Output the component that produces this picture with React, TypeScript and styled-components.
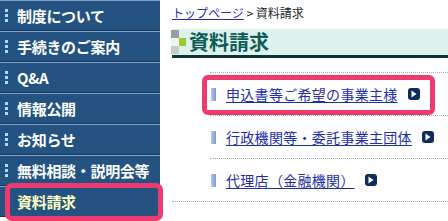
import styled, { createGlobalStyle } from 'styled-components';

const GlobalStyle = createGlobalStyle`
  body {
    margin: 0;
    background: #fff;
    font-family: "Noto Sans CJK JP", "Noto Sans", sans-serif;
  }
`;

const Page = styled.div`
  display: flex;
  gap: 12px;
  width: 448px;
  height: 221px;
  overflow: hidden;
`;

const SideNav = styled.ul`
  list-style: none;
  margin: 0;
  padding: 0;
  width: 160px;
  flex-shrink: 0;
  display: flex;
  flex-direction: column;
`;

const NavItem = styled.li<{ active?: boolean }>`
  position: relative;
  display: flex;
  align-items: center;
  gap: 9px;
  height: 29px;
  padding-left: 5px;
  background-color: #2d6193;
  background-image: radial-gradient(circle, #1f4b78 0.6px, transparent 0.9px);
  background-size: 2px 2px;
  border-top: 1px solid #7fa3c8;
  border-bottom: 1px solid #173a60;
  color: ${({ active }) => (active ? '#ffffc4' : '#ffffff')};
  font-size: 15px;
  font-weight: 700;
  letter-spacing: -0.3px;

  ${({ active }) =>
    active &&
    `
    &::after {
      content: '';
      position: absolute;
      left: 5px;
      right: -3px;
      top: -4px;
      bottom: -5px;
      border: 5px solid #ef3a6f;
      border-radius: 7px;
    }
  `}
`;

const NavDots = styled.span`
  width: 3px;
  height: 14px;
  background: repeating-linear-gradient(to bottom, #a8dcff 0 3px, transparent 3px 5px);
`;

const Main = styled.div`
  flex: 1;
  display: flex;
  flex-direction: column;
`;

const Breadcrumb = styled.div`
  height: 24px;
  padding-top: 5px;
  font-size: 12px;
  line-height: 16px;
  color: #222;

  a {
    color: #2a2ab8;
    text-decoration: underline;
  }
`;

const Heading = styled.h2`
  display: flex;
  align-items: center;
  gap: 3px;
  margin: 0;
  height: 26px;
  background: #ddf2ec;
  border-bottom: 3px solid #0f3536;
  color: #0d5c57;
  font-size: 20px;
  font-weight: 700;
  line-height: 26px;
`;

const HeadingMark = styled.span`
  display: grid;
  grid-template-columns: 8px 7px;
  grid-template-rows: 8px 8px 8px;
  margin-left: -1px;
`;

const Cell = styled.span<{ tone: string }>`
  background: ${({ tone }) => tone};
`;

const LinkSection = styled.div`
  margin-top: 14px;
  border-bottom: 1px dotted #b0b0b0;
`;

const LinkList = styled.ul`
  list-style: none;
  margin: 0 0 0 38px;
  padding: 0;
`;

const LinkItem = styled.li<{ active?: boolean }>`
  position: relative;
  display: flex;
  align-items: center;
  height: 42px;
  padding-left: 1px;
  border-top: 1px dotted #b0b0b0;
  font-size: 14px;
  letter-spacing: 0.3px;

  ${({ active }) =>
    active &&
    `
    &::after {
      content: '';
      position: absolute;
      left: -8px;
      right: 13px;
      top: 2px;
      bottom: 0px;
      border: 5px solid #ef3a6f;
      border-radius: 6px;
    }
  `}
`;

const LinkBar = styled.span`
  width: 5px;
  height: 13px;
  margin-right: 10px;
  background: linear-gradient(to right, #b4c8ee, #7d9ad8);
`;

const LinkText = styled.a`
  color: #1f2fa6;
  text-decoration: underline;
  text-underline-offset: 2px;
`;

const Arrow = styled.span`
  display: inline-flex;
  align-items: center;
  justify-content: center;
  width: 12px;
  height: 12px;
  margin-left: 10px;
  border-radius: 3px;
  background: #0e2c5e;
`;

const navItems = ['制度について', '手続きのご案内', 'Q&A', '情報公開', 'お知らせ', '無料相談・説明会等', '資料請求'];

const links = ['申込書等ご希望の事業主様', '行政機関等・委託事業主団体', '代理店（金融機関）'];

const App = () => {
  return (
    <Page>
      <GlobalStyle />
      <SideNav>
        {navItems.map((label, i) => (
          <NavItem key={label} active={i === navItems.length - 1}>
            <NavDots />
            {label}
          </NavItem>
        ))}
      </SideNav>
      <Main>
        <Breadcrumb>
          <a href="#">トップページ</a> &gt; 資料請求
        </Breadcrumb>
        <Heading>
          <HeadingMark>
            <Cell tone="#9c9c9c" />
            <Cell tone="#ddf2ec" />
            <Cell tone="#e9f6f1" />
            <Cell tone="#9ccc2c" />
            <Cell tone="#cacaca" />
            <Cell tone="#ddf2ec" />
          </HeadingMark>
          資料請求
        </Heading>
        <LinkSection>
          <LinkList>
            {links.map((label, i) => (
              <LinkItem key={label} active={i === 0}>
                <LinkBar />
                <LinkText href="#">{label}</LinkText>
                <Arrow>
                  <svg width="6" height="8" viewBox="0 0 6 8">
                    <path d="M0.5 0.5 L5.5 4 L0.5 7.5 Z" fill="#fff" />
                  </svg>
                </Arrow>
              </LinkItem>
            ))}
          </LinkList>
        </LinkSection>
      </Main>
    </Page>
  );
};

export default App;
